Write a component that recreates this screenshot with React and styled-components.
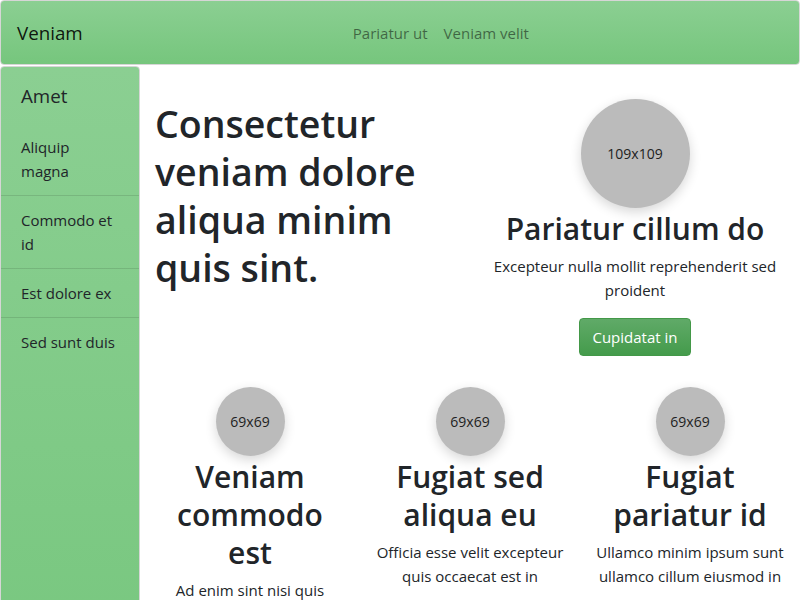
import React from "react";
import styled, { createGlobalStyle } from "styled-components";

const FONT = `"Open Sans", "Noto Sans", "Liberation Sans", sans-serif`;

const GlobalStyle = createGlobalStyle`
  html, body { margin: 0; padding: 0; background: #fff; }
  body {
    font-family: ${FONT};
    font-size: 15px;
    line-height: 24px;
    color: #212529;
  }
  * { box-sizing: border-box; }
`;

const Navbar = styled.nav`
  display: flex;
  align-items: center;
  height: 65px;
  padding: 0 16px;
  border: 1px solid #d6d6d6;
  border-radius: 4px;
  background: linear-gradient(to bottom, #8bcf92, #76c67d);
  margin-bottom: 1px;
`;

const Brand = styled.a`
  font-size: 18.75px;
  line-height: 30px;
  color: rgba(0, 0, 0, 0.9);
  margin-right: 16px;
  text-decoration: none;
`;

const NavLinks = styled.div`
  flex: 1;
  display: flex;
  justify-content: center;
`;

const NavLink = styled.a`
  padding: 8px;
  color: rgba(0, 0, 0, 0.5);
  text-decoration: none;
`;

const Layout = styled.div`
  display: flex;
  align-items: stretch;
`;

const Sidebar = styled.aside`
  width: 140px;
  flex-shrink: 0;
  border: 1px solid #d6d6d6;
  border-radius: 4px 4px 0 0;
  background: linear-gradient(to bottom, #8bcf92 0px, #78c77f 600px, #78c77f);
  min-height: 560px;
`;

const SideHeader = styled.div`
  padding: 17px 20px 15px;
  font-size: 18.75px;
  line-height: 24px;
`;

const SideItem = styled.div`
  padding: 12px 20px;
  line-height: 24px;
  border-bottom: ${(p) => (p.$last ? "none" : "1px solid rgba(0, 0, 0, 0.11)")};
`;

const Main = styled.main`
  flex: 1;
  padding-top: 33px;
`;

const TopRow = styled.div`
  display: grid;
  grid-template-columns: 1fr 1fr;
`;

const Col = styled.div`
  padding: 0 15px;
  text-align: ${(p) => (p.$center ? "center" : "left")};
`;

const Title = styled.h1`
  margin: 1px 0 0;
  font-size: 37.5px;
  line-height: 48px;
  font-weight: 600;
`;

const Circle = styled.div`
  width: ${(p) => p.$size}px;
  height: ${(p) => p.$size}px;
  border-radius: 50%;
  background: #bbbbbb;
  margin: 0 auto;
  display: flex;
  align-items: center;
  justify-content: center;
  font-size: 14px;
  color: #222;
  box-shadow: 0 4px 12px rgba(0, 0, 0, 0.16);
`;

const Heading = styled.h2`
  margin: 2px 0 6px;
  font-size: 30px;
  line-height: 38px;
  font-weight: 600;
`;

const Text = styled.p`
  margin: 0 0 16px;
`;

const Button = styled.button`
  font-family: ${FONT};
  font-size: 15px;
  line-height: 24px;
  padding: 6px 12px;
  color: #fff;
  border: 1px solid #439848;
  border-radius: 4px;
  background: linear-gradient(to bottom, #60aa68, #449b4b);
`;

const BottomRow = styled.div`
  display: grid;
  grid-template-columns: repeat(3, 1fr);
  margin-top: 31px;
`;

const features = [
  {
    title: "Veniam commodo est",
    text: "Ad enim sint nisi quis laboris dolor aliqua officia.",
  },
  {
    title: "Fugiat sed aliqua eu",
    text: "Officia esse velit excepteur quis occaecat est in",
  },
  {
    title: "Fugiat pariatur id",
    text: "Ullamco minim ipsum sunt ullamco cillum eiusmod in",
  },
];

export default function App() {
  return (
    <>
      <GlobalStyle />
      <Navbar>
        <Brand href="#">Veniam</Brand>
        <NavLinks>
          <NavLink href="#">Pariatur ut</NavLink>
          <NavLink href="#">Veniam velit</NavLink>
        </NavLinks>
      </Navbar>
      <Layout>
        <Sidebar>
          <SideHeader>Amet</SideHeader>
          <SideItem>Aliquip magna</SideItem>
          <SideItem>Commodo et id</SideItem>
          <SideItem>Est dolore ex</SideItem>
          <SideItem $last>Sed sunt duis</SideItem>
        </Sidebar>
        <Main>
          <TopRow>
            <Col>
              <Title>Consectetur veniam dolore aliqua minim quis sint.</Title>
            </Col>
            <Col $center>
              <Circle $size={109}>109x109</Circle>
              <Heading>Pariatur cillum do</Heading>
              <Text>Excepteur nulla mollit reprehenderit sed proident</Text>
              <Button>Cupidatat in</Button>
            </Col>
          </TopRow>
          <BottomRow>
            {features.map((f) => (
              <Col $center key={f.title}>
                <Circle $size={69}>69x69</Circle>
                <Heading>{f.title}</Heading>
                <Text>{f.text}</Text>
              </Col>
            ))}
          </BottomRow>
        </Main>
      </Layout>
    </>
  );
}
